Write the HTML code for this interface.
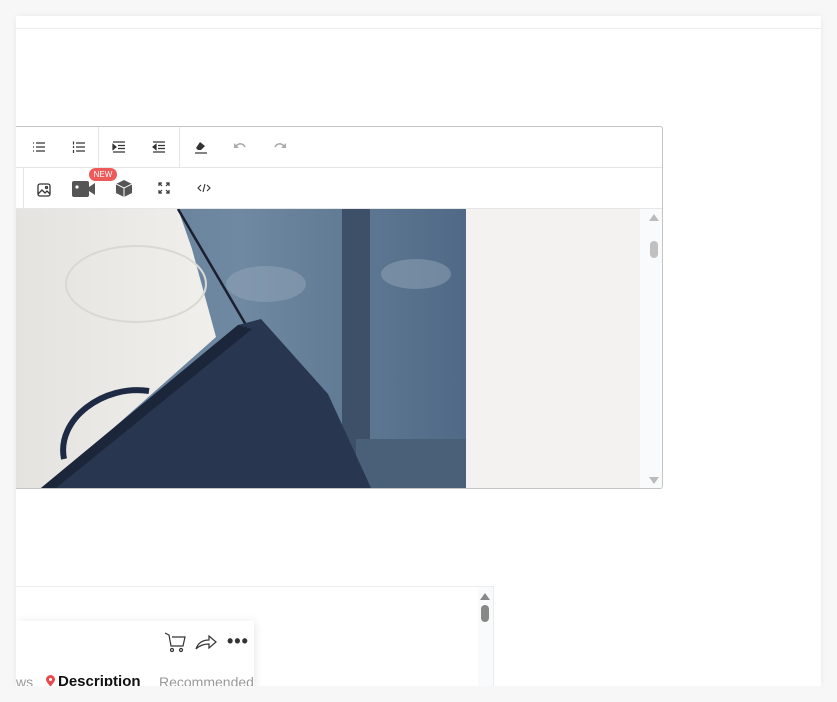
<!DOCTYPE html>
<html><head><style>
body{margin:0;width:837px;height:702px;background:#f7f7f7;position:relative;overflow:hidden;font-family:"Liberation Sans",sans-serif}
.panel{position:absolute;left:16px;top:16px;width:805px;height:670px;background:#fff;box-shadow:0 0 6px rgba(0,0,0,.06)}
.topline{position:absolute;left:16px;top:28px;width:805px;height:1px;background:#ececec}
.ed{position:absolute;left:16px;top:126px;width:646px;height:361px;border:1px solid #c4c4c4;border-left:none;border-radius:0 3px 3px 0;background:#fff;overflow:hidden}
.row{position:absolute;left:0;width:100%;height:40px;border-bottom:1px solid #e6e6e6}
.ic{position:absolute}
</style></head><body>
<div class="panel"></div>
<div class="topline"></div>
<div class="ed">
 <div class="row" style="top:0">
  <div style="position:absolute;left:82px;top:0;width:1px;height:40px;background:#e6e6e6"></div>
  <div style="position:absolute;left:163px;top:0;width:1px;height:40px;background:#e6e6e6"></div>
  <svg class="ic" style="left:16px;top:13px" width="14" height="14" viewBox="0 0 14 14" fill="none" stroke="#333" stroke-width="1.2"><path d="M4 3h9M4 7h9M4 11h9"/><path d="M1 3h1M1 7h1M1 11h1"/></svg>
  <svg class="ic" style="left:56px;top:13px" width="14" height="14" viewBox="0 0 14 14" fill="none" stroke="#333" stroke-width="1.2"><path d="M4 3h9M4 7h9M4 11h9M1.5 1.5v3M1.5 6v2M1.5 10v3"/></svg>
  <svg class="ic" style="left:96px;top:13px" width="14" height="14" viewBox="0 0 14 14" fill="none" stroke="#333" stroke-width="1.2"><path d="M1 2h12M6 5.5h7M6 8.5h7M1 12h12"/><path d="M1 4.5l3 2.5-3 2.5z" fill="#333"/></svg>
  <svg class="ic" style="left:136px;top:13px" width="14" height="14" viewBox="0 0 14 14" fill="none" stroke="#333" stroke-width="1.2"><path d="M1 2h12M6 5.5h7M6 8.5h7M1 12h12"/><path d="M4 4.5l-3 2.5 3 2.5z" fill="#333"/></svg>
  <svg class="ic" style="left:178px;top:13px" width="14" height="14" viewBox="0 0 14 14"><path d="M6 2l5 4-4 4H4L2 8z" fill="#333"/><path d="M1 13h12" stroke="#333" stroke-width="1.2"/></svg>
  <svg class="ic" style="left:217px;top:14px" width="14" height="12" viewBox="0 0 14 12" fill="none" stroke="#aaa" stroke-width="1.6"><path d="M3 5c3-3 7-3 9 1"/><path fill="#aaa" stroke="none" d="M1 2l0 5 5 0z"/></svg>
  <svg class="ic" style="left:257px;top:14px" width="14" height="12" viewBox="0 0 14 12" fill="none" stroke="#aaa" stroke-width="1.6"><path d="M11 5c-3-3-7-3-9 1"/><path fill="#aaa" stroke="none" d="M13 2l0 5-5 0z"/></svg>
 </div>
 <div class="row" style="top:41px">
  <div style="position:absolute;left:7px;top:0;width:1px;height:40px;background:#e6e6e6"></div>
  <svg class="ic" style="left:21px;top:15px" width="14" height="14" viewBox="0 0 14 14" fill="none" stroke="#333" stroke-width="1.3"><rect x="1" y="1" width="12" height="12" rx="2"/><path d="M1 11l4-4 3 3 2-2 3 3"/><circle cx="9.5" cy="4.5" r="1"/></svg>
  <svg class="ic" style="left:56px;top:13px" width="24" height="16" viewBox="0 0 24 16"><rect x="0" y="0" width="17" height="16" rx="2" fill="#555"/><circle cx="5" cy="6" r="1.6" fill="#fff"/><path d="M17 6l6-4v12l-6-4z" fill="#555"/></svg>
  <div style="position:absolute;left:73px;top:0;width:28px;height:13px;border-radius:7px;background:#ee5a5a;color:#fff;font-size:8px;line-height:13px;text-align:center">NEW</div>
  <svg class="ic" style="left:100px;top:12px" width="16" height="17" viewBox="0 0 16 17"><path d="M8 0l8 4v9l-8 4-8-4V4z" fill="#555"/><path d="M0 4l8 4 8-4M8 8v9" stroke="#fff" stroke-width="1" fill="none"/></svg>
  <svg class="ic" style="left:142px;top:14px" width="12" height="12" viewBox="0 0 12 12" fill="none" stroke="#333" stroke-width="1.2"><path d="M1 4V1h3M8 1h3v3M11 8v3H8M4 11H1V8M1 1l3 3M11 1L8 4M11 11L8 8M1 11l3-3"/></svg>
  <svg class="ic" style="left:181px;top:14px" width="14" height="12" viewBox="0 0 14 12" fill="none" stroke="#333" stroke-width="1.1"><path d="M4 3L1 6l3 3M10 3l3 3-3 3M8 2L6 10"/></svg>
 </div>
 <div style="position:absolute;left:0;top:82px;width:624px;height:279px;background:#f3f2f0"></div>
 <svg style="position:absolute;left:0;top:82px" width="450" height="279" viewBox="0 0 450 279">
  <defs>
   <linearGradient id="bg" x1="0" x2="1"><stop offset="0" stop-color="#5f7893"/><stop offset=".5" stop-color="#7089a2"/><stop offset="1" stop-color="#4f6986"/></linearGradient>
   <linearGradient id="sw" x1="0" x2="1"><stop offset="0" stop-color="#e4e3df"/><stop offset="1" stop-color="#f0efeb"/></linearGradient>
  </defs>
  <rect width="450" height="279" fill="url(#bg)"/>
  <ellipse cx="250" cy="75" rx="40" ry="18" fill="#93a5b8" opacity=".5"/>
  <ellipse cx="400" cy="65" rx="35" ry="15" fill="#93a5b8" opacity=".5"/>
  <rect x="326" y="0" width="28" height="279" fill="#3d5068"/>
  <rect x="340" y="230" width="110" height="49" fill="#4a5f78"/>
  <path d="M0 0H162L176 40L200 128L30 279H0z" fill="url(#sw)"/>
  <ellipse cx="120" cy="75" rx="70" ry="38" fill="none" stroke="#dad8d3" stroke-width="2"/>
  <path d="M162 0L230 116" stroke="#1a2030" stroke-width="2.5"/>
  <path d="M25 279L222 116L245 110L312 185L355 279z" fill="#283650"/>
  <path d="M25 279L222 116L236 120L40 279z" fill="#1c263a"/>
  <path d="M48 250c-8-40 40-75 85-68" stroke="#1e2a44" stroke-width="6" fill="none"/>
 </svg>
 <div style="position:absolute;left:624px;top:82px;width:22px;height:279px;background:#f9fafb"></div>
 <svg style="position:absolute;left:633px;top:86px" width="10" height="8"><path d="M0 8l5-7 5 7z" fill="#bbb"/></svg>
 <div style="position:absolute;left:634px;top:114px;width:8px;height:17px;border-radius:4px;background:#c1c1c1"></div>
 <svg style="position:absolute;left:633px;top:350px" width="10" height="8"><path d="M0 0l5 7 5-7z" fill="#bbb"/></svg>
</div>
<div style="position:absolute;left:16px;top:586px;width:477px;height:100px;border-top:1px solid #ececec;border-right:1px solid #ececec;overflow:hidden;background:#fff">
 <div style="position:absolute;left:0;top:34px;width:238px;height:80px;background:#fff;box-shadow:2px 0 8px rgba(0,0,0,.08)"></div>
 <svg style="position:absolute;left:148px;top:44px" width="22" height="22" viewBox="0 0 22 22" fill="none" stroke="#333" stroke-width="1.2"><path d="M1 2l4 2 2 11h12l2-9H8"/><circle cx="8" cy="19" r="1.5"/><circle cx="17" cy="19" r="1.5"/></svg>
 <svg style="position:absolute;left:179px;top:46px" width="22" height="18" viewBox="0 0 22 18" fill="none" stroke="#333" stroke-width="1.2"><path d="M1 16c2-6 6-9 13-9V3l7 6-7 6v-4c-6 0-10 2-13 5z"/></svg>
 <div style="position:absolute;left:211px;top:44px;font-size:18px;letter-spacing:1px;font-weight:bold;color:#333">•••</div>
 <div style="position:absolute;left:0;top:87px;font-size:14px;color:#999">ws</div>
 <svg style="position:absolute;left:30px;top:88px" width="9" height="12" viewBox="0 0 9 12"><path d="M4.5 12C1 7 0 6 0 4.5a4.5 4.5 0 019 0C9 6 8 7 4.5 12z" fill="#e84b4b"/><circle cx="4.5" cy="4.5" r="1.5" fill="#fff"/></svg>
 <div style="position:absolute;left:42px;top:86px;font-size:15px;font-weight:bold;color:#111">Description</div>
 <div style="position:absolute;left:143px;top:87px;font-size:14px;color:#999;width:95px;overflow:hidden;white-space:nowrap">Recommended</div>
 <div style="position:absolute;left:462px;top:0;width:15px;height:100px;background:#f9fafb"></div>
 <svg style="position:absolute;left:464px;top:5px" width="10" height="8"><path d="M0 8l5-7 5 7z" fill="#888"/></svg>
 <div style="position:absolute;left:465px;top:18px;width:8px;height:17px;border-radius:4px;background:#888"></div>
</div>
<div style="position:absolute;left:0;top:686px;width:837px;height:16px;background:#f7f7f7"></div>
</body></html>
